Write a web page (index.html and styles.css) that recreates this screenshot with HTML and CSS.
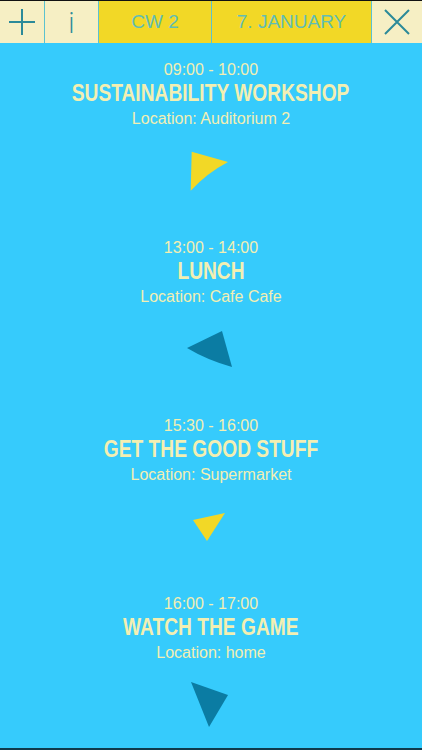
FILE: index.html
```html
<!DOCTYPE html>
<html lang="en">
<head>
  <meta charset="UTF-8">
  <title>Schedule</title>
  <link rel="stylesheet" href="styles.css">
</head>
<body>
  <div class="topbar">
    <div class="cell light">
      <svg class="icon" width="28" height="28" viewBox="0 0 28 28"><path d="M1 14H27M14 1V27" /></svg>
    </div>
    <div class="cell light"><span class="info">i</span></div>
    <div class="cell yellow">CW 2</div>
    <div class="cell yellow">7. JANUARY</div>
    <div class="cell light">
      <svg class="icon" width="26" height="26" viewBox="0 0 26 26"><path d="M1 1L25 25M25 1L1 25" /></svg>
    </div>
  </div>

  <div class="list">
    <div class="event">
      <div class="time">09:00 - 10:00</div>
      <div class="title"><span>SUSTAINABILITY WORKSHOP</span></div>
      <div class="place">Location: Auditorium 2</div>
      <svg class="arrow" width="80" height="91" viewBox="0 2 80 91">
        <path class="yellow-fill" d="M20.7 24.7L57 35Q36 46 19.7 63.7Z" />
      </svg>
    </div>

    <div class="event">
      <div class="time">13:00 - 14:00</div>
      <div class="title"><span>LUNCH</span></div>
      <div class="place">Location: Cafe Cafe</div>
      <svg class="arrow" width="80" height="91" viewBox="0 2 80 91">
        <path class="teal-fill" d="M51 26L61 62Q36 55 16 43Z" />
      </svg>
    </div>

    <div class="event">
      <div class="time">15:30 - 16:00</div>
      <div class="title"><span>GET THE GOOD STUFF</span></div>
      <div class="place">Location: Supermarket</div>
      <svg class="arrow" width="80" height="91" viewBox="0 2 80 91">
        <path class="yellow-fill" d="M22 37L54 30L36 58Z" />
      </svg>
    </div>

    <div class="event">
      <div class="time">16:00 - 17:00</div>
      <div class="title"><span>WATCH THE GAME</span></div>
      <div class="place">Location: home</div>
      <svg class="arrow" width="80" height="91" viewBox="0 2 80 91">
        <path class="teal-fill" d="M20 21L57 34L38 66Z" />
      </svg>
    </div>
  </div>
  <div class="bottom-line"></div>
</body>
</html>
```

FILE: styles.css
```css
body {
  margin: 0;
  background: #36cbfc;
  font-family: "Liberation Sans", Arial, sans-serif;
  width: 422px;
  height: 750px;
  overflow: hidden;
  display: flex;
  flex-direction: column;
}

.topbar {
  display: grid;
  grid-template-columns: 44px 54px 113px 160px 1fr;
  height: 42px;
  flex-shrink: 0;
  border-top: 1px solid #111;
}

.cell {
  display: flex;
  align-items: center;
  justify-content: center;
  border-left: 1px solid #5cc2cf;
  font-size: 19px;
  color: #62bdb4;
}

.cell:first-child {
  border-left: none;
}

.light {
  background: #f6efc4;
}

.yellow {
  background: #f2d826;
}

.icon path {
  stroke: #2b8a99;
  stroke-width: 2;
  fill: none;
}

.info {
  font-family: "Open Sans", sans-serif;
  font-weight: 300;
  font-size: 30px;
  line-height: 42px;
  color: #2b8a99;
}

.list {
  flex: 1;
  min-height: 0;
  overflow: hidden;
}

.event {
  height: 178px;
  padding-top: 18px;
  box-sizing: border-box;
  text-align: center;
  color: #f3efb2;
}

.time {
  font-size: 16px;
  line-height: 18px;
}

.title {
  font-weight: bold;
  font-size: 24px;
  line-height: 27px;
  white-space: nowrap;
}

.title span {
  display: inline-block;
  transform: scaleX(0.8);
}

.place {
  font-size: 16px;
  line-height: 20px;
  margin-top: 3px;
}

.arrow {
  display: block;
  margin: 0 auto;
}

.yellow-fill {
  fill: #f2d826;
}

.teal-fill {
  fill: #0b7ca3;
}

.bottom-line {
  height: 2px;
  flex-shrink: 0;
  background: #0f3a4c;
}
```
